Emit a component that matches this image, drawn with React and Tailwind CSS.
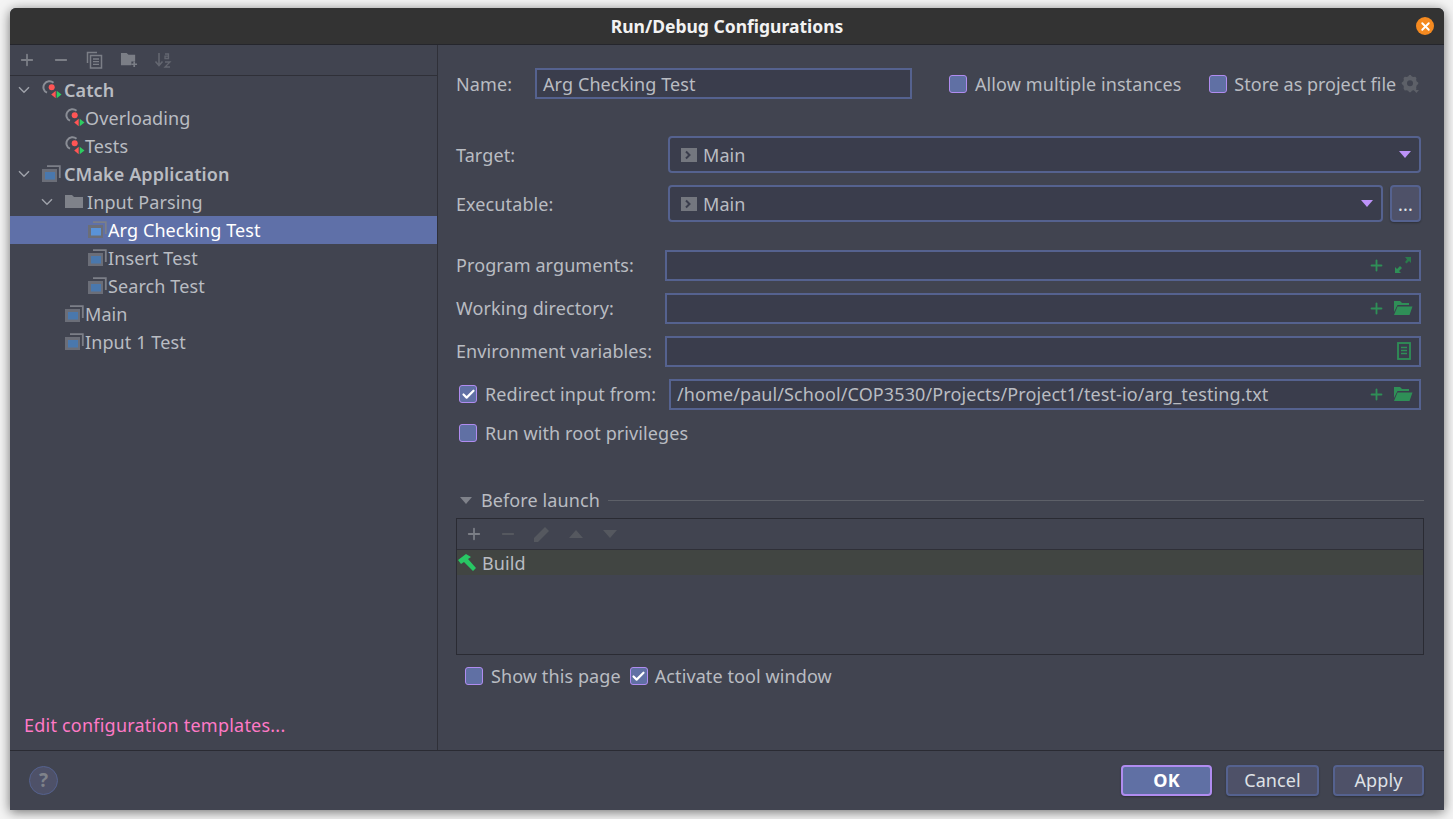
import React from 'react';
import { Plus, Minus, X, Check } from 'lucide-react';

const FONT = "font-['Noto_Sans','Open_Sans',sans-serif]";

const RunIcon = ({ selected }) => (
  <svg width="20" height="18" viewBox="0 0 20 18" className="shrink-0">
    <path d="M5 1.200h12.800v11.800" fill="none" stroke="#7c7f88" strokeWidth="1.800" />
    <rect x="0" y="4" width="15" height="13" fill="#6b6e78" />
    <rect x="3" y="7" width="10" height="7.500" fill={selected ? '#5a93d8' : '#4a78ad'} />
  </svg>
);

const CatchIcon = () => (
  <svg width="20" height="20" viewBox="0 0 20 20" className="shrink-0">
    <path d="M11.500 2.800A6 6 0 1 0 5 12.700" fill="none" stroke="#8a8d95" strokeWidth="2" />
    <circle cx="9.700" cy="7.200" r="3" fill="#ff5555" />
    <path d="M13.700 10.800l-4.500 3.700 4.500 3.700z" fill="#ff5555" />
    <path d="M14.700 10.800l4.800 3.700-4.800 3.700z" fill="#2ecc61" />
  </svg>
);

const FolderIcon = () => (
  <svg width="18" height="16" viewBox="0 0 18 16" className="shrink-0">
    <path d="M0 1h7l2 2h9v11H0z" fill="#7f828a" />
  </svg>
);

const Chevron = () => (
  <svg width="12" height="8" viewBox="0 0 12 8" className="shrink-0">
    <path d="M1 1.200l5 5 5-5" fill="none" stroke="#9da0a8" strokeWidth="1.500" />
  </svg>
);

const TreeRow = ({ indent, icon, children, bold, selected, open, iconGap }) => (
  <div className={`flex h-[28px] items-center ${selected ? 'bg-[#5f70a8] text-white' : 'text-[#b9bcc2]'} ${indent}`}>
    {open ? <div className="flex w-[24px] shrink-0 items-center"><Chevron /></div> : null}
    {icon}
    <span className={`${iconGap} whitespace-nowrap ${bold ? 'font-semibold' : ''}`}>{children}</span>
  </div>
);

const Checkbox = ({ checked }) => (
  <span className="flex h-[18px] w-[18px] shrink-0 items-center justify-center rounded-[3px] border-[1.5px] border-[#b08cf0] bg-[#6070a4]">
    {checked ? <Check size={15} strokeWidth={3.5} color="#ffffff" /> : null}
  </span>
);

const CheckLabel = ({ checked, children, gap }) => (
  <label className={`flex items-center text-[#b9bcc2] ${gap}`}>
    <Checkbox checked={checked} />
    <span className="whitespace-nowrap">{children}</span>
  </label>
);

const AddIcon = () => <Plus size={17} strokeWidth={2.6} color="#2f8f57" className="shrink-0" />;

const ExpandIcon = () => (
  <svg width="20" height="18" viewBox="-1 0 20 18" className="shrink-0">
    <path d="M11 1h6v6l-2-2-2.500 2.500-1.500-1.500L13 3.500z" fill="#2a7a4c" />
    <path d="M1 17v-6l2 2 3-3 2 2-3 3 2 2z" fill="#2f8f57" />
  </svg>
);

const OpenFolderIcon = () => (
  <svg width="20" height="16" viewBox="0 0 20 16" className="shrink-0">
    <path d="M1 1h6l2 2h7v2H4.500L1 12z" fill="#2f8f57" />
    <path d="M4.500 6.500H19.500L16.500 15H1z" fill="#2f8f57" />
  </svg>
);

const DocIcon = () => (
  <svg width="20" height="18" viewBox="-4 0 20 18" className="shrink-0">
    <rect x="1" y="1" width="12" height="16" fill="none" stroke="#2f8f57" strokeWidth="1.800" />
    <path d="M4 5.500h6M4 8.500h6M4 11.500h6" stroke="#2f8f57" strokeWidth="1.300" />
  </svg>
);

const FieldRow = ({ label, mt, children }) => (
  <div className={`flex h-[30px] items-center ${mt}`}>
    <span className="w-[209px] shrink-0 whitespace-nowrap text-[#b9bcc2]">{label}</span>
    {children}
  </div>
);

const TextField = ({ children, value, width }) => (
  <div className={`flex h-[31px] items-center border-2 border-[#55628f] bg-[#3a3d4c] pl-[6px] pr-[6px] text-[#b9bcc2] ${width}`}>
    <span className="flex-1 whitespace-nowrap">{value}</span>
    <div className="flex items-center gap-[8px]">{children}</div>
  </div>
);

const Combo = ({ value, width }) => (
  <div className={`flex h-[37px] items-center rounded-[4px] border-2 border-[#55628f] bg-[#3a3d4c] pl-[11px] pr-[8px] text-[#b9bcc2] ${width}`}>
    <svg width="16" height="14" viewBox="0 0 16 14" className="mr-[6px] shrink-0">
      <rect width="16" height="14" fill="#74777f" />
      <path d="M5 3.500l3.500 3.500-3.500 3.500" fill="none" stroke="#3a3d4c" strokeWidth="2" />
    </svg>
    <span className="flex-1">{value}</span>
    <svg width="12" height="7" viewBox="0 0 12 7"><path d="M0 0h12L6 7z" fill="#bd93f9" /></svg>
  </div>
);

const FooterButton = ({ children, primary, width }) => (
  <button className={`h-[31px] rounded-[4px] border-2 shadow-[0_1px_2px_rgba(0,0,0,0.3)] ${width} ${primary ? 'border-[#b08cf0] bg-[#6070a4] font-bold text-white' : 'border-[#55628f] bg-[#4e5168] text-[#dfe1e6]'}`}>
    {children}
  </button>
);

export default function App() {
  return (
    <div className={`h-[819px] w-[1453px] overflow-hidden bg-[#f4f4f4] pl-[10px] pt-[8px] text-[18px] leading-[24px] tracking-[0.1px] ${FONT}`}>
      <div className="flex h-[802px] w-[1434px] flex-col overflow-hidden rounded-t-[6px] bg-[#414450] shadow-[0_2px_12px_rgba(0,0,0,0.55)]">
        {/* Title bar */}
        <div className="relative flex h-[37px] shrink-0 items-center justify-center border-b border-[#25262c] bg-[#333333]">
          <span className="text-[17.5px] font-bold tracking-normal text-[#f2f2f2]">Run/Debug Configurations</span>
          <span className="absolute right-[10px] top-[9px] flex h-[18px] w-[18px] items-center justify-center rounded-full bg-[#f58a20]">
            <X size={13} strokeWidth={3.5} color="#ffffff" />
          </span>
        </div>

        <div className="flex min-h-0 flex-1">
          {/* Left column */}
          <div className="flex w-[428px] shrink-0 flex-col border-r border-[#2f3038]">
            <div className="flex h-[31px] shrink-0 items-center gap-[16px] border-b border-[#2f3038] pl-[8px]">
              <Plus size={18} strokeWidth={2.4} color="#7b7e86" />
              <Minus size={18} strokeWidth={2.4} color="#7b7e86" />
              <svg width="18" height="18" viewBox="0 0 18 18">
                <path d="M1.500 12V1.500H11" fill="none" stroke="#7b7e86" strokeWidth="1.500" />
                <rect x="4.500" y="4.500" width="11" height="12.500" fill="none" stroke="#7b7e86" strokeWidth="1.500" />
                <path d="M7 8h6M7 10.700h6M7 13.400h6" stroke="#7b7e86" strokeWidth="1.300" />
              </svg>
              <svg width="18" height="18" viewBox="0 0 19 19">
                <path d="M1 2h6l2 2h7v7h-4v4H1z" fill="#7b7e86" />
                <path d="M15 11v6M12 14h6" stroke="#7b7e86" strokeWidth="1.800" />
              </svg>
              <svg width="18" height="18" viewBox="0 0 18 18" className="opacity-60">
                <path d="M5 2v12M1.500 10.500L5 14.500l3.500-4" fill="none" stroke="#7b7e86" strokeWidth="1.600" />
                <path d="M11 3h3.500v4.500H11V5.200h3.500M11 11h5l-5 5h5" fill="none" stroke="#7b7e86" strokeWidth="1.300" />
              </svg>
            </div>

            <div className="flex-1">
              <TreeRow indent="pl-[8px]" open icon={<CatchIcon />} bold iconGap="ml-[2px]">Catch</TreeRow>
              <TreeRow indent="pl-[55px]" icon={<CatchIcon />}>Overloading</TreeRow>
              <TreeRow indent="pl-[55px]" icon={<CatchIcon />}>Tests</TreeRow>
              <TreeRow indent="pl-[8px]" open icon={<RunIcon />} bold iconGap="ml-[2px]">CMake Application</TreeRow>
              <TreeRow indent="pl-[31px]" open icon={<FolderIcon />} iconGap="ml-[4px]">Input Parsing</TreeRow>
              <TreeRow indent="pl-[78px]" icon={<RunIcon selected />} selected>Arg Checking Test</TreeRow>
              <TreeRow indent="pl-[78px]" icon={<RunIcon />}>Insert Test</TreeRow>
              <TreeRow indent="pl-[78px]" icon={<RunIcon />}>Search Test</TreeRow>
              <TreeRow indent="pl-[55px]" icon={<RunIcon />}>Main</TreeRow>
              <TreeRow indent="pl-[55px]" icon={<RunIcon />}>Input 1 Test</TreeRow>
            </div>

            <div className="h-[37px] shrink-0 pl-[14px] tracking-[0.22px] text-[#ff79c6]">Edit configuration templates...</div>
          </div>

          {/* Right column */}
          <div className="min-w-0 flex-1 pl-[18px] pr-[20px] pt-[23px]">
            <div className="flex h-[31px] items-center">
              <span className="w-[79px] shrink-0 text-[#b9bcc2]">Name:</span>
              <TextField value="Arg Checking Test" width="w-[377px]" />
              <CheckLabel gap="ml-[37px] gap-[8px]">Allow multiple instances</CheckLabel>
              <CheckLabel gap="ml-[28px] gap-[7px] tracking-normal">Store as project file</CheckLabel>
              <svg width="18" height="20" viewBox="0 0 24 26" className="ml-[5px] shrink-0">
                <path d="M12 8a4 4 0 1 0 0 8 4 4 0 0 0 0-8zm9 6.500l2-1.500v-2l-2-1.500-.8-2 .4-2.500-1.600-1.600-2.500.4-2-.8L13 1h-2L9.500 3l-2 .8L5 3.400 3.400 5l.4 2.500-.8 2L1 11v2l2 1.500.8 2-.4 2.500L5 21.600l2.500-.4 2 .8L11 24h2l1.500-2 2-.8 2.500.4 1.600-1.600-.4-2.500z" fill="#5d6068" fillRule="evenodd" />
                <path d="M17 21h7l-3.500 4z" fill="#5d6068" />
              </svg>
            </div>

            <div className="mt-[37px] flex items-center">
              <span className="w-[212px] shrink-0 text-[#b9bcc2]">Target:</span>
              <Combo value="Main" width="w-[753px]" />
            </div>
            <div className="mt-[12px] flex items-center">
              <span className="w-[212px] shrink-0 text-[#b9bcc2]">Executable:</span>
              <Combo value="Main" width="w-[715px]" />
              <button className="ml-[7px] h-[37px] w-[31px] rounded-[4px] border-2 border-[#55628f] bg-[#4e5168] text-[#dfe1e6] shadow-[0_1px_2px_rgba(0,0,0,0.3)]">...</button>
            </div>

            <FieldRow label="Program arguments:" mt="mt-[28px]">
              <TextField width="w-[756px]"><AddIcon /><ExpandIcon /></TextField>
            </FieldRow>
            <FieldRow label="Working directory:" mt="mt-[13px]">
              <TextField width="w-[756px]"><AddIcon /><OpenFolderIcon /></TextField>
            </FieldRow>
            <FieldRow label="Environment variables:" mt="mt-[13px]">
              <TextField width="w-[756px]"><DocIcon /></TextField>
            </FieldRow>

            <div className="mt-[13px] flex h-[30px] items-center">
              <CheckLabel checked gap="ml-[3px] w-[210px] gap-[8px]">Redirect input from:</CheckLabel>
              <TextField value="/home/paul/School/COP3530/Projects/Project1/test-io/arg_testing.txt" width="w-[752px]"><AddIcon /><OpenFolderIcon /></TextField>
            </div>
            <div className="mt-[10px] flex h-[28px] items-center pl-[3px]">
              <CheckLabel gap="gap-[8px]">Run with root privileges</CheckLabel>
            </div>

            <div className="mt-[41px] flex h-[24px] items-center">
              <svg width="12" height="7" viewBox="0 0 12 7" className="ml-[4px] shrink-0"><path d="M0 0h12L6 7z" fill="#7f828a" /></svg>
              <span className="ml-[9px] whitespace-nowrap text-[#b9bcc2]">Before launch</span>
              <div className="ml-[8px] h-px flex-1 bg-[#5d6068]" />
            </div>

            <div className="mt-[6px] h-[137px] w-[968px] border border-[#2a2b33]">
              <div className="flex h-[31px] items-center gap-[16px] border-b border-[#2f3038] pl-[8px]">
                <Plus size={18} strokeWidth={2.4} color="#7b7e86" />
                <Minus size={18} strokeWidth={2.4} color="#55585f" />
                <svg width="18" height="18" viewBox="0 0 18 18"><path d="M1 17v-4L12 2l4 4L5 17z" fill="#55585f" /></svg>
                <svg width="18" height="10" viewBox="0 0 18 10"><path d="M9 1l7 8H2z" fill="#55585f" /></svg>
                <svg width="18" height="10" viewBox="0 0 18 10"><path d="M9 9L2 1h14z" fill="#55585f" /></svg>
              </div>
              <div className="flex h-[25px] items-center bg-[#414542] pl-[1px] text-[#b9bcc2]">
                <svg width="20" height="18" viewBox="0 0 20 18" className="shrink-0">
                  <path d="M0 6L8 0l5 3-3 2 8 9-3 3-9-9-3 2z" fill="#28c764" />
                </svg>
                <span className="ml-[4px]">Build</span>
              </div>
            </div>

            <div className="mt-[9px] flex h-[24px] items-center pl-[9px]">
              <CheckLabel gap="gap-[8px]">Show this page</CheckLabel>
              <CheckLabel checked gap="ml-[9px] gap-[7px]">Activate tool window</CheckLabel>
            </div>
          </div>
        </div>

        {/* Footer */}
        <div className="flex h-[60px] shrink-0 items-center justify-between border-t border-[#2a2b33] pb-[1px] pl-[19px] pr-[20px]">
          <span className="flex h-[29px] w-[29px] items-center justify-center rounded-full border border-[#55628f] bg-[#4e5168] text-[19px] font-bold text-[#7f828a]">?</span>
          <div className="flex items-center gap-[14px]">
            <FooterButton primary width="w-[91px]">OK</FooterButton>
            <FooterButton width="w-[93px]">Cancel</FooterButton>
            <FooterButton width="w-[91px]">Apply</FooterButton>
          </div>
        </div>
      </div>
    </div>
  );
}
